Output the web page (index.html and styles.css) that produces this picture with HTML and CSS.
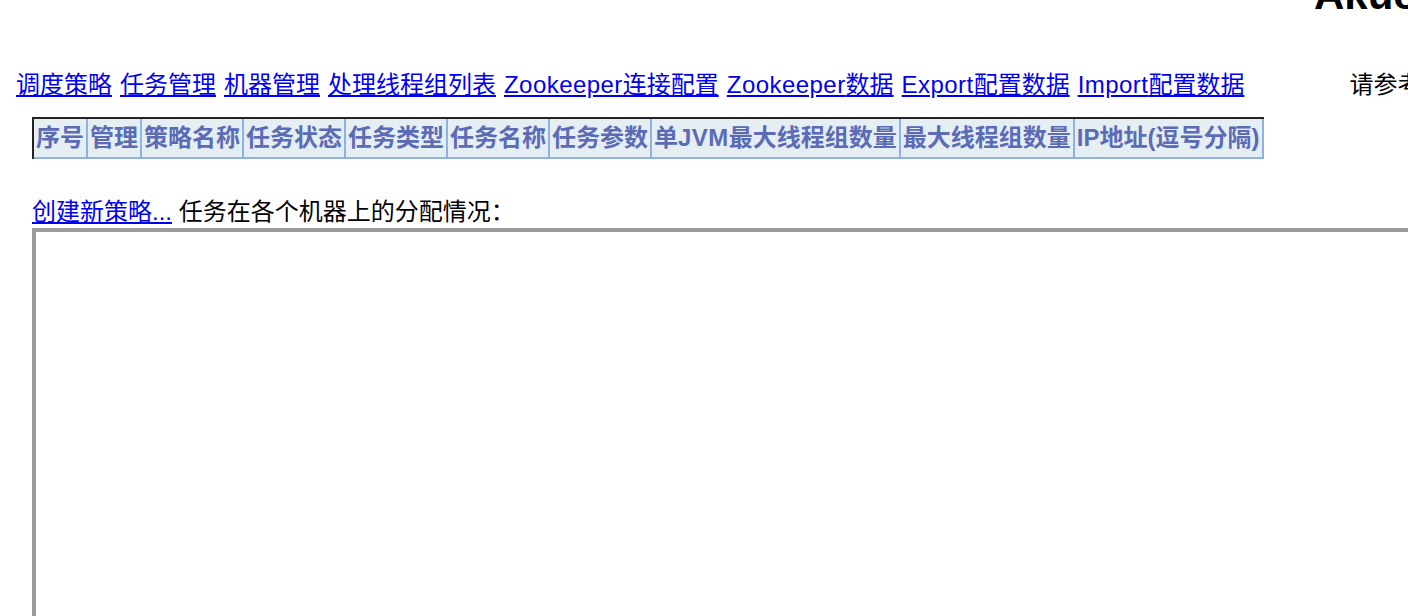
FILE: index.html
```html
<!DOCTYPE html>
<html lang="zh">
<head>
<meta charset="utf-8">
<title>TBSchedule</title>
<link rel="stylesheet" href="styles.css">
</head>
<body>
<h1 class="title">Akuei TBSchedule</h1>
<div class="nav">
  <div class="links"><a href="#">调度策略</a> <a href="#">任务管理</a> <a href="#">机器管理</a> <a href="#">处理线程组列表</a> <a href="#"><span class="lat">Zookeeper</span>连接配置</a> <a href="#"><span class="lat">Zookeeper</span>数据</a> <a href="#"><span class="lat">Export</span>配置数据</a> <a href="#"><span class="lat">Import</span>配置数据</a></div>
  <div class="note">请参考文档</div>
</div>
<table class="grid">
  <thead>
    <tr>
      <th>序号</th><th>管理</th><th>策略名称</th><th>任务状态</th><th>任务类型</th><th>任务名称</th><th>任务参数</th><th>单<span class="jvm">JVM</span>最大线程组数量</th><th>最大线程组数量</th><th>IP地址(逗号分隔)</th>
    </tr>
  </thead>
</table>
<div class="create"><a href="#">创建新策略...</a> 任务在各个机器上的分配情况：</div>
<div class="frame"></div>
</body>
</html>
```

FILE: styles.css
```css
html, body {
  margin: 0;
  padding: 0;
  overflow: hidden;
  background: #ffffff;
}
body {
  font-family: "Liberation Sans", "Noto Sans CJK SC", sans-serif;
  font-size: 24px;
  line-height: 28px;
  color: #000000;
  width: 1408px;
  height: 616px;
}
a {
  color: #0000ee;
  text-decoration: underline;
}
.title {
  margin: -26px 0 0 0;
  padding-left: 1314px;
  font-size: 42px;
  line-height: 42px;
  font-weight: bold;
  white-space: nowrap;
  overflow: hidden;
}
.nav {
  margin-top: 55px;
  padding-left: 16px;
  display: flex;
  white-space: nowrap;
}
.links {
  word-spacing: 1.33px;
}
.lat {
  letter-spacing: 0.45px;
}
.note {
  margin-left: 105px;
}
.grid {
  margin: 18px 0 0 32px;
  border-collapse: separate;
  border-spacing: 0;
  border-top: 2px solid #222222;
  border-left: 2px solid #222222;
}
.grid th {
  background: #e5eef3;
  color: #5b6bb6;
  font-weight: bold;
  line-height: 38px;
  padding: 0 2px;
  border-right: 2px solid #8fb1e4;
  border-bottom: 2px solid #8fb1e4;
  white-space: nowrap;
}
.jvm {
  letter-spacing: 0.5px;
}
.create {
  margin: 39px 0 0 32px;
  white-space: nowrap;
}
.frame {
  margin: 2px 0 0 32px;
  width: 1500px;
  height: 500px;
  border: 4px solid #9b9b9b;
}
```
